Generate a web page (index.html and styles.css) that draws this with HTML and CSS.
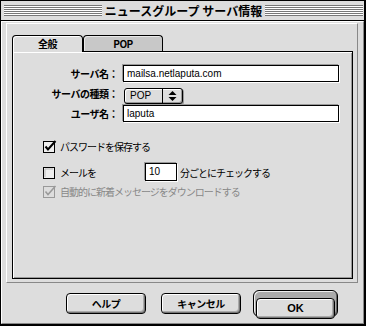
FILE: index.html
```html
<!DOCTYPE html>
<html lang="ja">
<head>
  <meta charset="UTF-8">
  <title>ニュースグループ サーバ情報</title>
  <link rel="stylesheet" href="styles.css">
</head>
<body>

  <div class="window">
    <div class="titlebar">
      <span class="stripes"></span>
      <span class="title">ニュースグループ サーバ情報</span>
      <span class="stripes"></span>
    </div>

    <div class="content">
      <div class="group">
        <div class="tabs">
          <div class="tab active">全般</div>
          <div class="tab">POP</div>
        </div>

        <div class="panel">
          <div class="form">
            <label class="label">サーバ名：</label>
            <div class="field">mailsa.netlaputa.com</div>

            <label class="label">サーバの種類：</label>
            <div class="popup">
              <span class="popup-text">POP</span>
              <span class="popup-arrows">
                <svg width="9" height="10" viewBox="0 0 9 10"><path d="M0.5 4 L4.5 0 L8.5 4 Z M0.5 6 L4.5 10 L8.5 6 Z" fill="#000"/></svg>
              </span>
            </div>

            <label class="label">ユーザ名：</label>
            <div class="field">laputa</div>
          </div>

          <div class="checks">
            <div class="check row-save">
              <svg class="box" width="14" height="13" viewBox="0 0 14 13">
                <rect x="0.5" y="1.5" width="11" height="11" fill="#eee" stroke="#000"/>
                <path d="M2.5 6.5 L5 9.5 L12.5 1" fill="none" stroke="#000" stroke-width="2"/>
              </svg>
              <span>パスワードを保存する</span>
            </div>

            <div class="check row-mail">
              <svg class="box" width="14" height="13" viewBox="0 0 14 13">
                <rect x="0.5" y="1.5" width="11" height="11" fill="#eee" stroke="#000"/>
                <path d="M2 3 H10 M2 3 V11" fill="none" stroke="#bbb"/>
              </svg>
              <span class="mail-label">メールを</span>
              <div class="field num">10</div>
              <span>分ごとにチェックする</span>
            </div>

            <div class="check row-auto disabled">
              <svg class="box" width="14" height="13" viewBox="0 0 14 13">
                <rect x="0.5" y="1.5" width="11" height="11" fill="#ddd" stroke="#999"/>
                <path d="M2.5 6.5 L5 9.5 L12.5 1" fill="none" stroke="#999" stroke-width="1.5"/>
              </svg>
              <span>自動的に新着メッセージをダウンロードする</span>
            </div>
          </div>
        </div>
      </div>

      <div class="buttons">
        <button class="btn help">ヘルプ</button>
        <button class="btn cancel">キャンセル</button>
        <div class="default-ring">
          <button class="btn ok">OK</button>
        </div>
      </div>
    </div>
  </div>

</body>
</html>
```

FILE: styles.css
```css
body {
  margin: 0;
  background: #fff;
}

.window {
  width: 366px;
  height: 326px;
  box-sizing: border-box;
  border: 1px solid #000;
  border-right-width: 2px;
  border-bottom-width: 2px;
  background: #ddd;
  display: flex;
  flex-direction: column;
  font-family: "Noto Sans CJK JP", sans-serif;
  color: #000;
}

/* title bar */
.titlebar {
  height: 19px;
  flex: none;
  border-bottom: 1px solid #000;
  display: flex;
  align-items: center;
  padding: 0 1px 0 3px;
  background: #ddd;
}

.stripes {
  flex: 1;
  height: 11px;
  background: repeating-linear-gradient(to bottom, #777 0 1px, #fff 1px 2px);
}

.title {
  padding: 0 3px;
  font-size: 12px;
  font-weight: bold;
  line-height: 19px;
  white-space: nowrap;
}

/* body */
.content {
  flex: 1;
  display: flex;
  flex-direction: column;
  border-style: solid;
  border-width: 1px;
  border-color: #fff #888 #888 #fff;
  padding: 1px 5px 0 4px;
}

.group {
  height: 260px;
  box-sizing: border-box;
  border-style: solid;
  border-width: 1px;
  border-color: #fff #888 #888 #fff;
  padding: 11px 4px 3px 5px;
  display: flex;
  flex-direction: column;
}

.tabs {
  display: flex;
  height: 16px;
  flex: none;
}

.tab {
  box-sizing: border-box;
  height: 16px;
  border: 1px solid #000;
  border-bottom: none;
  border-radius: 4px 4px 0 0;
  background: #c8c8c8;
  box-shadow: inset 1px 1px #e8e8e8;
  font-size: 10px;
  font-weight: bold;
  letter-spacing: -0.5px;
  line-height: 15px;
  text-align: center;
  width: 80px;
}

.tab.active {
  width: 71px;
  height: 17px;
  margin-bottom: -1px;
  position: relative;
  z-index: 1;
  background: #ddd;
  box-shadow: inset 1px 1px #fff;
}

.panel {
  flex: 1;
  border: 1px solid #000;
  box-shadow: inset 1px 1px #fff, inset -1px -1px #999;
  padding-top: 13px;
}

/* form rows */
.form {
  display: grid;
  grid-template-columns: 105px 216px;
  column-gap: 5px;
  align-items: center;
}

.label {
  font-size: 10px;
  font-weight: bold;
  letter-spacing: -0.5px;
  text-align: right;
  white-space: nowrap;
}

.field {
  box-sizing: border-box;
  height: 17px;
  border: 1px solid #000;
  background: #fff;
  box-shadow: -1px -1px 0 #999, 1px 1px 0 #fff;
  padding-left: 3px;
  font-family: "Liberation Sans", Arial, sans-serif;
  font-size: 10px;
  line-height: 15px;
}

.popup {
  box-sizing: border-box;
  width: 59px;
  height: 16px;
  margin: 6px 0 1px 1px;
  border: 1px solid #000;
  border-radius: 3px;
  background: #ddd;
  box-shadow: inset 1px 1px #fff, inset -1px -1px #999, 1px 1px 0 #999;
  display: flex;
}

.popup-text {
  flex: 1;
  padding-left: 5px;
  font-family: "Liberation Sans", Arial, sans-serif;
  font-size: 10px;
  line-height: 14px;
}

.popup-arrows {
  width: 19px;
  border-left: 1px solid #000;
  display: flex;
  align-items: center;
  justify-content: center;
}

/* checkboxes */
.checks {
  display: flex;
  flex-direction: column;
  padding-left: 30px;
}

.check {
  display: flex;
  align-items: center;
  gap: 3px;
  font-size: 10px;
  letter-spacing: -1px;
  white-space: nowrap;
}

.box {
  flex: none;
}

.row-save {
  height: 13px;
  margin-top: 18px;
}

.row-mail {
  height: 18px;
  margin-top: 10px;
}

.row-auto {
  height: 13px;
  margin-top: 4px;
}

.mail-label {
  width: 82px;
}

.field.num {
  width: 32px;
  height: 18px;
  letter-spacing: 0;
  line-height: 16px;
}

.disabled {
  color: #888;
}

/* buttons */
.buttons {
  display: flex;
  justify-content: flex-end;
  align-items: center;
  height: 27px;
  margin-top: 7px;
  padding-right: 20px;
}

.btn {
  box-sizing: border-box;
  width: 80px;
  height: 21px;
  padding: 0;
  border: 1px solid #000;
  border-radius: 4px;
  background: #ddd;
  box-shadow: inset 1px 1px #fff, inset -1px -1px #777, inset -2px -2px #aaa;
  font-family: "Noto Sans CJK JP", sans-serif;
  font-size: 10px;
  font-weight: bold;
  letter-spacing: -0.5px;
  color: #000;
}

.help {
  margin-right: 15px;
}

.cancel {
  margin-right: 12px;
}

.default-ring {
  box-sizing: border-box;
  width: 85px;
  height: 27px;
  padding: 2px;
  border: 1px solid #000;
  border-radius: 6px;
  background: #aaa;
  box-shadow: inset 1px 1px #eee, inset -1px -1px #666;
}

.btn.ok {
  width: 79px;
  font-family: "Liberation Sans", Arial, sans-serif;
  font-size: 11px;
  letter-spacing: 0;
}
```
